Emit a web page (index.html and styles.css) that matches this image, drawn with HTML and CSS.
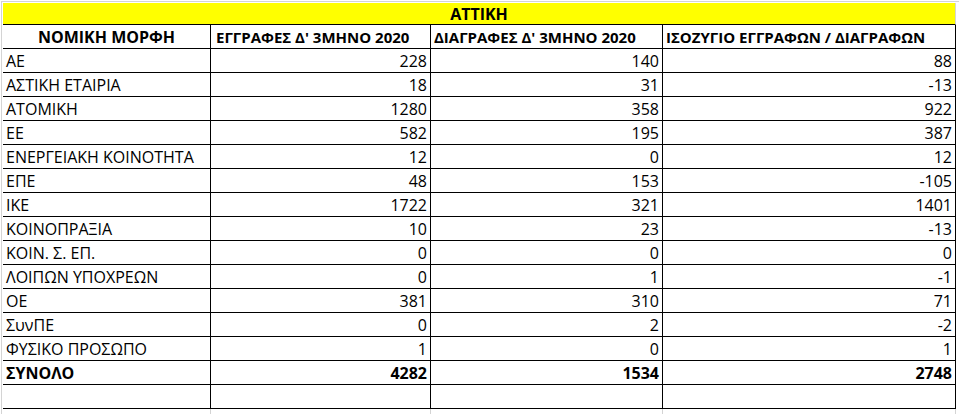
FILE: index.html
```html
<!DOCTYPE html>
<html lang="el">
<head>
<meta charset="utf-8">
<title>ΑΤΤΙΚΗ</title>
<link rel="stylesheet" href="styles.css">
</head>
<body>
<div class="sheet">
  <div class="grid">
    <div class="c title">ΑΤΤΙΚΗ</div>

    <div class="c hd first">ΝΟΜΙΚΗ ΜΟΡΦΗ</div>
    <div class="c hd narrow h2">ΕΓΓΡΑΦΕΣ Δ' 3ΜΗΝΟ 2020</div>
    <div class="c hd narrow">ΔΙΑΓΡΑΦΕΣ Δ' 3ΜΗΝΟ 2020</div>
    <div class="c hd narrow">ΙΣΟΖΥΓΙΟ ΕΓΓΡΑΦΩΝ / ΔΙΑΓΡΑΦΩΝ</div>

    <div class="c lbl">ΑΕ</div><div class="c num">228</div><div class="c num">140</div><div class="c num">88</div>
    <div class="c lbl">ΑΣΤΙΚΗ ΕΤΑΙΡΙΑ</div><div class="c num">18</div><div class="c num">31</div><div class="c num">-13</div>
    <div class="c lbl">ΑΤΟΜΙΚΗ</div><div class="c num">1280</div><div class="c num">358</div><div class="c num">922</div>
    <div class="c lbl">ΕΕ</div><div class="c num">582</div><div class="c num">195</div><div class="c num">387</div>
    <div class="c lbl">ΕΝΕΡΓΕΙΑΚΗ ΚΟΙΝΟΤΗΤΑ</div><div class="c num">12</div><div class="c num">0</div><div class="c num">12</div>
    <div class="c lbl">ΕΠΕ</div><div class="c num">48</div><div class="c num">153</div><div class="c num">-105</div>
    <div class="c lbl">ΙΚΕ</div><div class="c num">1722</div><div class="c num">321</div><div class="c num">1401</div>
    <div class="c lbl">ΚΟΙΝΟΠΡΑΞΙΑ</div><div class="c num">10</div><div class="c num">23</div><div class="c num">-13</div>
    <div class="c lbl">ΚΟΙΝ. Σ. ΕΠ.</div><div class="c num">0</div><div class="c num">0</div><div class="c num">0</div>
    <div class="c lbl">ΛΟΙΠΩΝ ΥΠΟΧΡΕΩΝ</div><div class="c num">0</div><div class="c num">1</div><div class="c num">-1</div>
    <div class="c lbl">ΟΕ</div><div class="c num">381</div><div class="c num">310</div><div class="c num">71</div>
    <div class="c lbl">ΣυνΠΕ</div><div class="c num">0</div><div class="c num">2</div><div class="c num">-2</div>
    <div class="c lbl">ΦΥΣΙΚΟ ΠΡΟΣΩΠΟ</div><div class="c num">1</div><div class="c num">0</div><div class="c num">1</div>
    <div class="c lbl total">ΣΥΝΟΛΟ</div><div class="c num total">4282</div><div class="c num total">1534</div><div class="c num total">2748</div>

    <div class="c lbl"></div><div class="c num"></div><div class="c num"></div><div class="c num"></div>

    <div class="c spill"></div><div class="c spill"></div><div class="c spill"></div><div class="c spill"></div>
  </div>
</div>
</body>
</html>
```

FILE: styles.css
```css
* {
  box-sizing: border-box;
}

html, body {
  margin: 0;
  padding: 0;
  background: #ffffff;
}

body {
  font-family: "Open Sans", "Noto Sans", "DejaVu Sans", sans-serif;
  font-size: 16px;
  color: #000000;
  overflow: hidden;
}

.sheet {
  margin: 1px 0 0 1px;
  padding: 1px 0 0 1px;
  border-top: 1px solid #d4d4d4;
  border-left: 1px solid #d4d4d4;
}

.grid {
  display: grid;
  grid-template-columns: 208px 220px 232px 293px;
}

.c {
  height: 24px;
  padding: 2px 3px 0 3px;
  line-height: 21px;
  white-space: nowrap;
  overflow: hidden;
  border-right: 1px solid #000000;
  border-bottom: 1px solid #000000;
}

.title {
  grid-column: 1 / -1;
  height: 22px;
  padding-top: 2px;
  line-height: 19px;
  text-align: center;
  font-weight: 700;
  background: #ffff00;
  border-right: 1px solid #d4d4d4;
}

.hd {
  font-weight: 700;
}

.hd.narrow {
  font-size: 15px;
}

.hd.first {
  text-align: center;
}

.hd.h2 {
  padding-left: 5px;
}

.num {
  text-align: right;
}

.total {
  font-weight: 700;
}

.spill {
  height: 6px;
  border-bottom: 0;
  border-right: 1px solid #d4d4d4;
}
```
